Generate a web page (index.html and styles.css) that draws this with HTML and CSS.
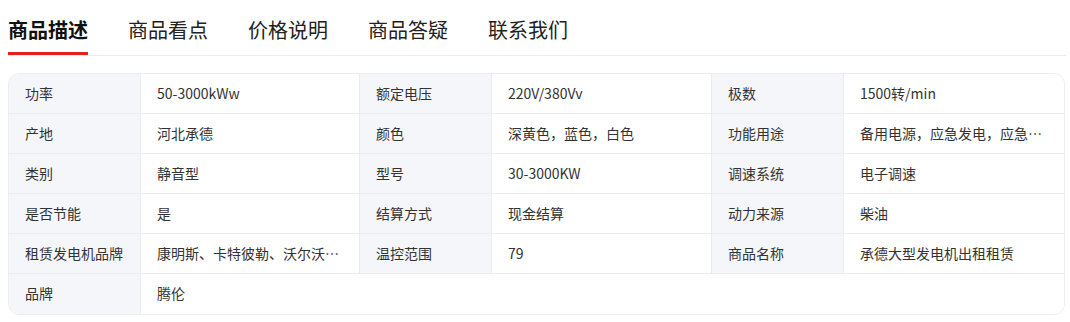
FILE: index.html
```html
<!DOCTYPE html>
<html lang="zh">
<head>
<meta charset="utf-8">
<link rel="stylesheet" href="styles.css">
</head>
<body>
<nav class="tabs">
  <a class="tab active">商品描述</a>
  <a class="tab">商品看点</a>
  <a class="tab">价格说明</a>
  <a class="tab">商品答疑</a>
  <a class="tab">联系我们</a>
</nav>
<div class="specs">
  <div class="lbl">功率</div><div class="val">50-3000kWw</div>
  <div class="lbl">额定电压</div><div class="val">220V/380Vv</div>
  <div class="lbl">极数</div><div class="val last">1500转/min</div>

  <div class="lbl">产地</div><div class="val">河北承德</div>
  <div class="lbl">颜色</div><div class="val">深黄色，蓝色，白色</div>
  <div class="lbl">功能用途</div><div class="val last">备用电源，应急发电，应急…</div>

  <div class="lbl">类别</div><div class="val">静音型</div>
  <div class="lbl">型号</div><div class="val">30-3000KW</div>
  <div class="lbl">调速系统</div><div class="val last">电子调速</div>

  <div class="lbl">是否节能</div><div class="val">是</div>
  <div class="lbl">结算方式</div><div class="val">现金结算</div>
  <div class="lbl">动力来源</div><div class="val last">柴油</div>

  <div class="lbl">租赁发电机品牌</div><div class="val">康明斯、卡特彼勒、沃尔沃…</div>
  <div class="lbl">温控范围</div><div class="val">79</div>
  <div class="lbl">商品名称</div><div class="val last">承德大型发电机出租租赁</div>

  <div class="lbl bottom">品牌</div><div class="val bottom wide">腾伦</div>
</div>
</body>
</html>
```

FILE: styles.css
```css
* { box-sizing: border-box; }
body {
  margin: 0;
  background: #fff;
  font-family: "Noto Sans CJK SC", "Liberation Sans", sans-serif;
  color: #333;
}
.tabs {
  display: flex;
  gap: 40px;
  margin: 0 4px 0 8px;
  border-bottom: 1px solid #ebebeb;
  height: 56px;
}
.tab {
  display: block;
  font-size: 20px;
  line-height: 20px;
  padding-top: 20px;
  height: 55px;
  color: #222;
  border-bottom: 3px solid transparent;
}
.tab.active {
  font-weight: 700;
  color: #111;
  border-bottom-color: #e4211e;
}
.specs {
  margin: 17px 5px 0 8px;
  border: 1px solid #ebedf0;
  border-radius: 11px;
  overflow: hidden;
  display: grid;
  grid-template-columns: 132px 219px 132px 220px 132px 1fr;
  grid-auto-rows: 40px;
  font-size: 14px;
}
.lbl, .val {
  padding: 0 16px;
  line-height: 39px;
  border-bottom: 1px solid #ebedf0;
  border-right: 1px solid #ebedf0;
  white-space: nowrap;
  overflow: hidden;
}
.lbl { background: #f5f6fa; color: #333; }
.val { background: #fff; color: #333; }
.val.last { border-right: none; }
.bottom { border-bottom: none; }
.wide { grid-column: 2 / span 5; border-right: none; }
```
